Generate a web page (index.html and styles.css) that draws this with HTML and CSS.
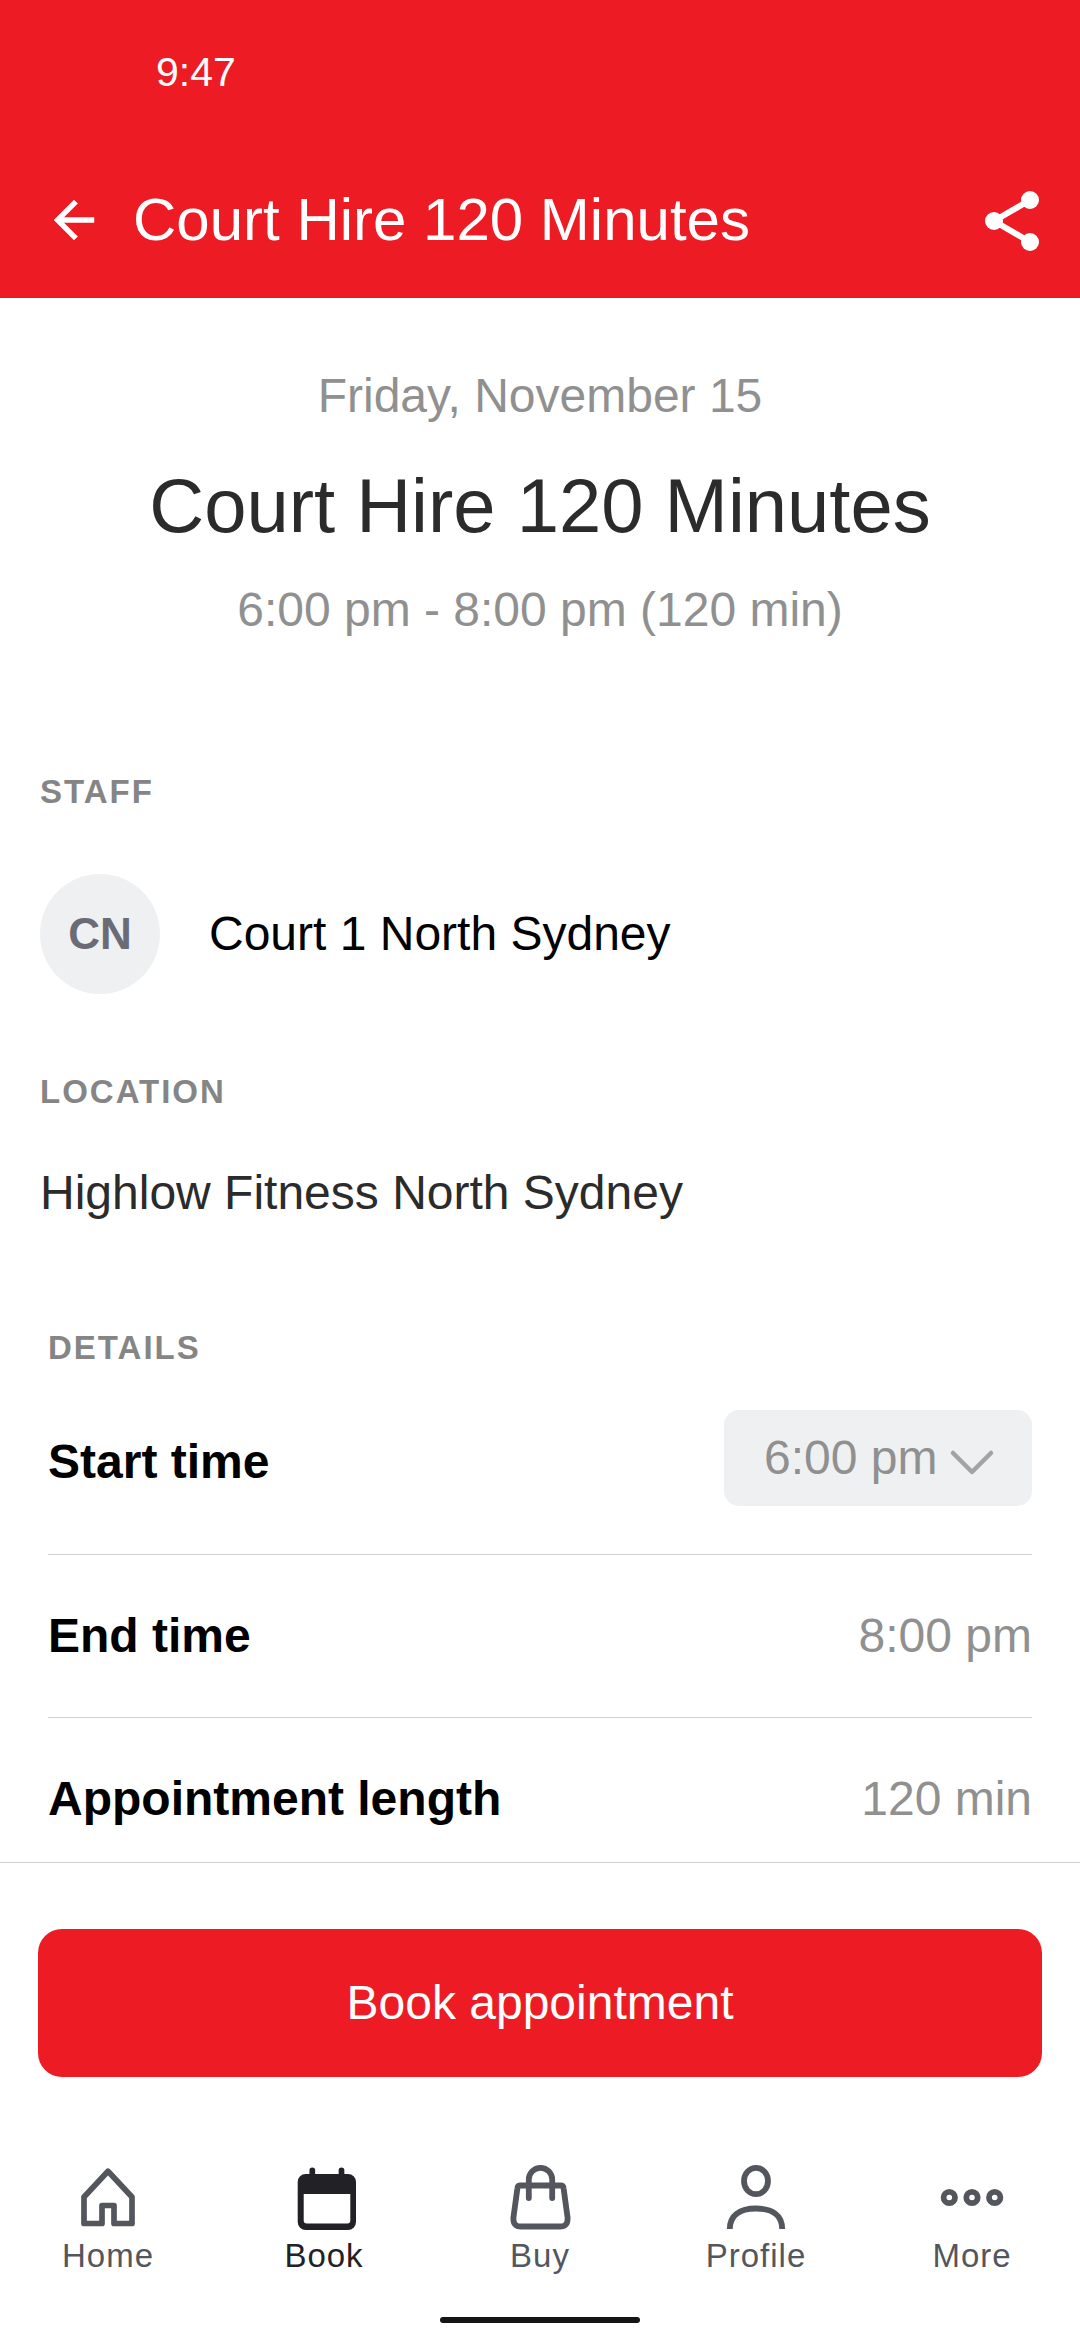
FILE: index.html
```html
<!DOCTYPE html>
<html lang="en">
<head>
<meta charset="utf-8">
<meta name="viewport" content="width=device-width, initial-scale=1">
<title>Court Hire 120 Minutes</title>
<link rel="stylesheet" href="styles.css">
</head>
<body>
<div class="app">
  <header class="top">
    <div class="status"><time>9:47</time></div>
    <div class="toolbar">
      <button class="icon-button" type="button" aria-label="Back">
        <svg class="back-icon" viewBox="0 0 24 24" aria-hidden="true"><path fill="currentColor" stroke="currentColor" stroke-width=".2" d="M20 11H7.83l5.59-5.59L12 4l-8 8 8 8 1.41-1.41L7.83 13H20z"/></svg>
      </button>
      <p class="toolbar-title">Court Hire 120 Minutes</p>
      <button class="icon-button" type="button" aria-label="Share">
        <svg class="share-icon" viewBox="0 0 72 72" aria-hidden="true">
          <path d="M54 16 18 37l36 21" fill="none" stroke="currentColor" stroke-width="6"/>
          <g fill="currentColor"><circle cx="54" cy="16" r="9"/><circle cx="18" cy="37" r="9"/><circle cx="54" cy="58" r="9"/></g>
        </svg>
      </button>
    </div>
  </header>

  <main class="content">
    <section class="summary">
      <p class="muted">Friday, November 15</p>
      <h1 class="name">Court Hire 120 Minutes</h1>
      <p class="muted">6:00 pm - 8:00 pm (120 min)</p>
    </section>

    <section class="block">
      <h2 class="label">STAFF</h2>
      <div class="staff">
        <span class="avatar">CN</span>
        <span class="staff-name">Court 1 North Sydney</span>
      </div>
    </section>

    <section class="block">
      <h2 class="label">LOCATION</h2>
      <p class="place">Highlow Fitness North Sydney</p>
    </section>

    <section class="details">
      <h2 class="label">DETAILS</h2>
      <div class="row row-select">
        <label class="term" for="start">Start time</label>
        <div class="picker">
          <select class="picker-input" id="start"><option>6:00 pm</option></select>
          <svg class="chevron" viewBox="0 0 48 30" aria-hidden="true"><path d="M5 5l19 19L43 5" fill="none" stroke="currentColor" stroke-width="4.5" stroke-linecap="round" stroke-linejoin="round"/></svg>
        </div>
      </div>
      <div class="row">
        <span class="term">End time</span>
        <span class="muted">8:00 pm</span>
      </div>
      <div class="row">
        <span class="term">Appointment length</span>
        <span class="muted">120 min</span>
      </div>
    </section>
  </main>

  <footer class="bottom">
    <button class="book-button" type="button">Book appointment</button>
    <nav class="tabs">
      <a class="tab" href="#home">
        <svg class="tab-icon" viewBox="0 0 72 72" aria-hidden="true"><path d="M12 62.5V36L36 10.3 60 36v26.500H42v-18H30v18z" fill="none" stroke="currentColor" stroke-width="5.700" stroke-linejoin="round"/></svg>
        Home
      </a>
      <a class="tab tab-current" href="#book" aria-current="page">
        <svg class="tab-icon" viewBox="0 0 72 72" aria-hidden="true">
          <path fill="currentColor" fill-rule="evenodd" d="M17.700 13H60a8 8 0 0 1 8 8v40a8 8 0 0 1-8 8H17.700a8 8 0 0 1-8-8V21a8 8 0 0 1 8-8zM15.700 33V59.500a3 3 0 0 0 3 3H59.300a3 3 0 0 0 3-3V33z"/>
          <path d="M24.300 15V9.300M53.500 15V9.300" stroke="currentColor" stroke-width="5.700" stroke-linecap="round"/>
        </svg>
        Book
      </a>
      <a class="tab" href="#buy">
        <svg class="tab-icon" viewBox="0 0 72 72" aria-hidden="true"><g fill="none" stroke="currentColor" stroke-width="5.800" stroke-linecap="round"><path d="M16.500 24.500h40q2.800 0 3.100 2.800l4 29.500q.4 8.700-7.600 8.700H17q-8 0-7.600-8.700l4-29.500q.3-2.800 3.100-2.800z"/><path d="M24.800 37V18.500a11.700 11.700 0 0 1 23.400 0V37"/></g></svg>
        Buy
      </a>
      <a class="tab" href="#profile">
        <svg class="tab-icon" viewBox="0 0 72 72" aria-hidden="true"><g fill="none" stroke="currentColor" stroke-width="5.800"><ellipse cx="36" cy="20" rx="12" ry="13.200"/><path d="M9.800 68C9.800 54 20 47.500 36 47.500S62.200 54 62.200 68"/></g></svg>
        Profile
      </a>
      <a class="tab" href="#more">
        <svg class="tab-icon" viewBox="0 0 72 72" aria-hidden="true"><g fill="none" stroke="currentColor" stroke-width="5.800"><circle cx="13.300" cy="36.500" r="5.700"/><circle cx="36" cy="36.500" r="5.700"/><circle cx="58.700" cy="36.500" r="5.700"/></g></svg>
        More
      </a>
    </nav>
    <div class="home-bar"></div>
  </footer>
</div>
</body>
</html>
```
FILE: styles.css
```css
:root {
  --red: #ed1c24;
  --muted: #909090;
  --soft: #eff0f2;
  --line: #d0d0d0;
}

* {
  box-sizing: border-box;
}

body,
h1,
h2,
p {
  margin: 0;
}

body {
  font-family: "Liberation Sans", Arial, sans-serif;
  font-size: 48px;
  line-height: 56px;
  color: #000;
  background: #fff;
}

button,
select {
  font: inherit;
  border: 0;
}

.app {
  display: flex;
  flex-direction: column;
  height: 100vh;
}

/* Header */
.top {
  flex: none;
  padding: 48px 32px 42px 44px;
  color: #fff;
  background: var(--red);
}

.status {
  padding-left: 112px;
  font-size: 41px;
  line-height: 48px;
}

.toolbar {
  display: flex;
  align-items: center;
  margin-top: 88px;
}

.icon-button {
  display: flex;
  padding: 0;
  color: inherit;
  background: none;
}

.back-icon {
  width: 60px;
  height: 60px;
}

.share-icon {
  width: 72px;
  height: 72px;
}

.toolbar-title {
  flex: 1;
  margin-left: 29px;
  font-size: 60px;
  line-height: 72px;
}

/* Scrolling content */
.content {
  flex: 1;
  min-height: 0;
  overflow: hidden;
}

.summary {
  padding: 70px 40px 132px;
  text-align: center;
}

.name {
  margin: 36px 0 30px;
  font-size: 76px;
  font-weight: 400;
  line-height: 92px;
  color: #2b2b2b;
}

.muted {
  color: var(--muted);
}

.block {
  padding: 0 40px;
}

.label {
  font-size: 33px;
  line-height: 44px;
  letter-spacing: 2px;
  color: #858585;
}

.staff {
  display: flex;
  align-items: center;
  gap: 49px;
  padding: 60px 0 76px;
}

.avatar {
  display: grid;
  place-items: center;
  width: 120px;
  height: 120px;
  border-radius: 50%;
  font-size: 44px;
  font-weight: 700;
  color: #6b6b76;
  background: var(--soft);
}

.place {
  padding: 51px 0 105px;
  color: #2b2b2b;
}

.details {
  padding: 0 48px;
}

.row {
  display: flex;
  align-items: center;
  justify-content: space-between;
  padding: 53px 0;
  border-bottom: 1px solid var(--line);
}

.row-select {
  padding: 40px 0;
}

.term {
  font-weight: 700;
}

.picker {
  position: relative;
  margin-bottom: 8px;
}

.picker-input {
  display: block;
  width: 308px;
  height: 96px;
  padding: 0 40px;
  border-radius: 15px;
  color: var(--muted);
  background: var(--soft);
  appearance: none;
}

.chevron {
  position: absolute;
  top: 38px;
  right: 36px;
  width: 48px;
  height: 30px;
  color: #a3a3a3;
  pointer-events: none;
}

/* Footer */
.bottom {
  flex: none;
  padding: 66px 0 17px;
  border-top: 1px solid var(--line);
  background: #fff;
}

.book-button {
  display: block;
  width: calc(100% - 76px);
  height: 148px;
  margin: 0 38px 84px;
  border-radius: 24px;
  color: #fff;
  background: var(--red);
}

.tabs {
  display: grid;
  grid-template-columns: repeat(5, 1fr);
}

.tab {
  display: flex;
  flex-direction: column;
  align-items: center;
  gap: 3px;
  font-size: 33px;
  line-height: 40px;
  letter-spacing: 1px;
  color: #54565e;
  text-decoration: none;
}

.tab-current {
  color: #222226;
}

.tab-icon {
  width: 72px;
  height: 72px;
}

.home-bar {
  width: 200px;
  height: 6px;
  margin: 41px auto 0;
  border-radius: 3px;
  background: #141613;
}
```
